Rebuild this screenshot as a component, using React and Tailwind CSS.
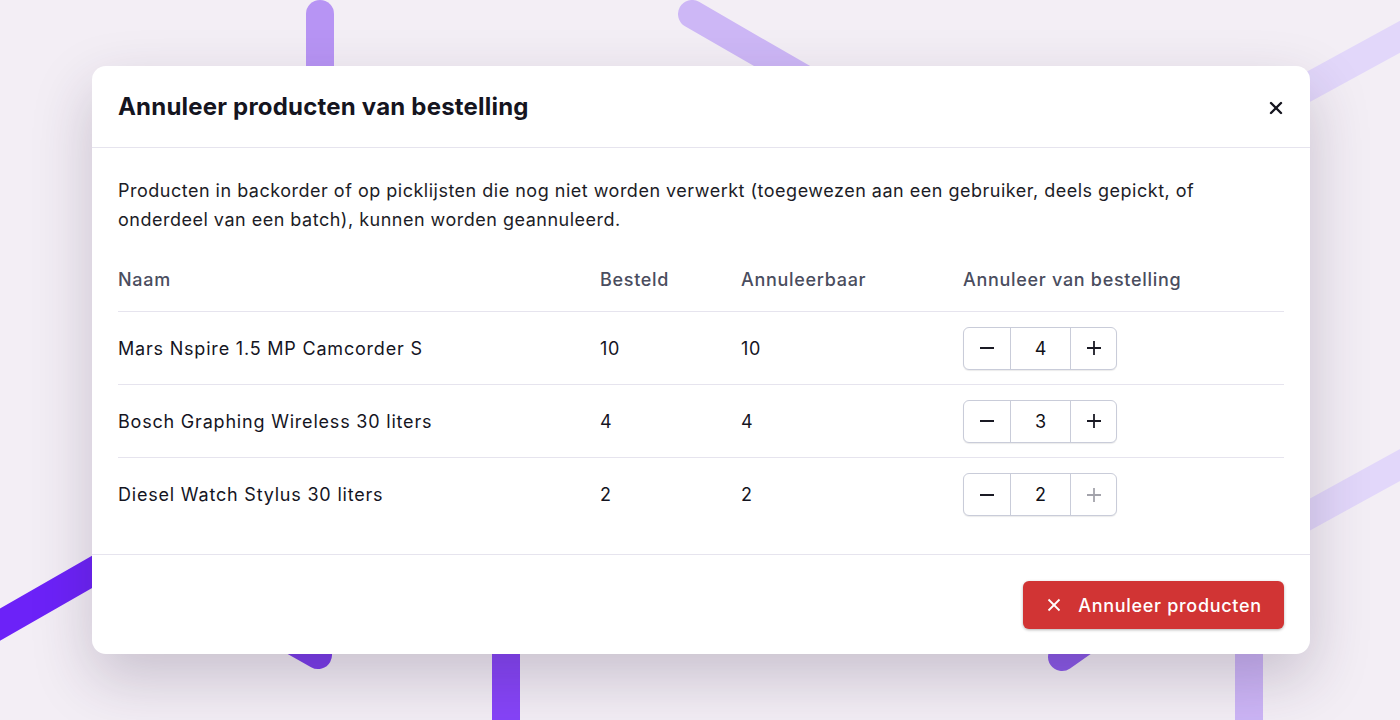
import React from "react";

function Bg() {
  return (
    <svg className="absolute inset-0" width="1400" height="720" viewBox="0 0 1400 720" fill="none">
      <g strokeWidth="28" strokeLinecap="round">
        <line x1="320" y1="14" x2="320" y2="400" stroke="#b794f4" />
        <line x1="692" y1="14" x2="900" y2="134" stroke="#cdb7f6" />
        <line x1="1200" y1="146" x2="1460" y2="4" stroke="#e2d7fa" />
        <line x1="1200" y1="575" x2="1460" y2="432" stroke="#e2d7fa" />
        <line x1="-20" y1="636" x2="200" y2="510" stroke="#6c22f8" />
        <line x1="150" y1="560" x2="318" y2="655" stroke="#7a3cec" />
        <line x1="506" y1="500" x2="506" y2="760" stroke="#8644f8" />
        <line x1="1062" y1="657" x2="1200" y2="560" stroke="#8b5ae9" />
        <line x1="1249" y1="500" x2="1249" y2="760" stroke="#ccb5f6" />
      </g>
    </svg>
  );
}

function Stepper({ value, plusDisabled }) {
  const c = plusDisabled ? "#a3a3ab" : "#1a1a24";
  return (
    <div className="flex h-[43px] w-[154px] rounded-[6px] border border-[#c9ccd9] shadow-[0_1px_1px_rgba(0,0,0,0.08)] bg-white overflow-hidden">
      <div className="w-[47px] flex items-center justify-center border-r border-[#c9ccd9]">
        <svg width="18" height="18" viewBox="0 0 18 18"><line x1="2" y1="9" x2="16" y2="9" stroke="#1a1a24" strokeWidth="1.8" /></svg>
      </div>
      <div className="w-[60px] flex items-center justify-center border-r border-[#c9ccd9] text-[18px] text-[#111118]">{value}</div>
      <div className="flex-1 flex items-center justify-center">
        <svg width="18" height="18" viewBox="0 0 18 18">
          <line x1="2" y1="9" x2="16" y2="9" stroke={c} strokeWidth="1.8" />
          <line x1="9" y1="2" x2="9" y2="16" stroke={c} strokeWidth="1.8" />
        </svg>
      </div>
    </div>
  );
}

const rows = [
  { name: "Mars Nspire 1.5 MP Camcorder S", ordered: 10, cancel: 10, value: 4 },
  { name: "Bosch Graphing Wireless 30 liters", ordered: 4, cancel: 4, value: 3 },
  { name: "Diesel Watch Stylus 30 liters", ordered: 2, cancel: 2, value: 2, disabled: true },
];

export default function App() {
  return (
    <div
      className="relative w-[1400px] h-[720px] overflow-hidden bg-[#f3eef5] flex items-center justify-center pl-[2px]"
      style={{ fontFamily: "Inter, 'Noto Sans', sans-serif" }}
    >
      <Bg />
      <div className="relative w-[1218px] h-[588px] bg-white rounded-[14px] shadow-[0_24px_60px_rgba(50,30,70,0.22)] flex flex-col">
        <div className="h-[82px] border-b border-[#e6e4ee] px-[26px] flex items-center justify-between">
          <h1 className="text-[24px] font-bold text-[#15151f] tracking-[0.2px] pt-[1px]">Annuleer producten van bestelling</h1>
          <svg width="14" height="14" viewBox="0 0 14 14" className="mr-[1px] mt-[2px]">
            <line x1="2" y1="2" x2="12" y2="12" stroke="#15151f" strokeWidth="2.4" strokeLinecap="round" />
            <line x1="12" y1="2" x2="2" y2="12" stroke="#15151f" strokeWidth="2.4" strokeLinecap="round" />
          </svg>
        </div>
        <div className="flex-1 px-[26px] pt-[28px]">
          <p className="text-[18px] leading-[29px] text-[#1c1c26] tracking-[0.5px] pr-[40px]">
            Producten in backorder of op picklijsten die nog niet worden verwerkt (toegewezen aan een gebruiker, deels gepickt, of onderdeel van een batch), kunnen worden geannuleerd.
          </p>
          <div className="mt-[16px]">
            <div className="grid grid-cols-[482px_141px_222px_1fr] h-[62px] items-center border-b border-[#e6e4ee] text-[18px] font-medium tracking-[0.7px] text-[#4a4d5e] pb-[2px]">
              <div>Naam</div>
              <div>Besteld</div>
              <div>Annuleerbaar</div>
              <div>Annuleer van bestelling</div>
            </div>
            {rows.map((r, i) => (
              <div
                key={i}
                className={"grid grid-cols-[482px_141px_222px_1fr] h-[73px] items-center text-[18px] tracking-[0.8px] text-[#15151f] " + (i < rows.length - 1 ? "border-b border-[#e6e4ee]" : "")}
              >
                <div>{r.name}</div>
                <div>{r.ordered}</div>
                <div>{r.cancel}</div>
                <div className="tracking-normal"><Stepper value={r.value} plusDisabled={r.disabled} /></div>
              </div>
            ))}
          </div>
        </div>
        <div className="h-[100px] border-t border-[#e6e4ee] px-[26px] flex items-start justify-end pt-[26px]">
          <button className="h-[48px] w-[261px] rounded-[6px] bg-[#d13434] shadow-[0_1px_3px_rgba(0,0,0,0.3)] flex items-center justify-center gap-[17px] pl-[2px] text-white text-[18px] font-medium tracking-[0.7px]">
            <svg width="14" height="14" viewBox="0 0 14 14">
              <line x1="1.5" y1="1.5" x2="12.5" y2="12.5" stroke="#fff" strokeWidth="1.8" />
              <line x1="12.5" y1="1.5" x2="1.5" y2="12.5" stroke="#fff" strokeWidth="1.8" />
            </svg>
            <span>Annuleer producten</span>
          </button>
        </div>
      </div>
    </div>
  );
}
